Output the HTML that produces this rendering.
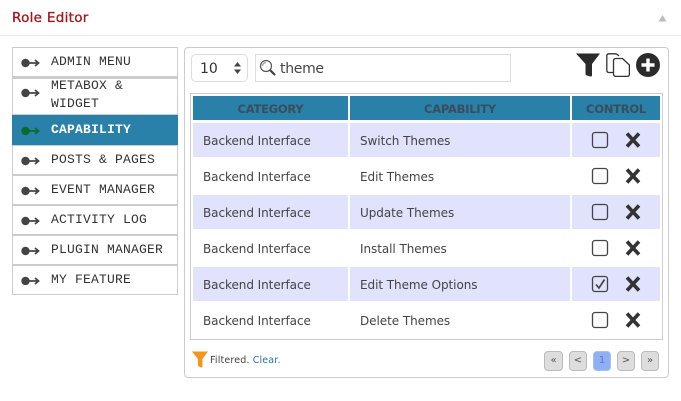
<!DOCTYPE html>
<html>
<head>
<meta charset="utf-8">
<style>
html,body{margin:0;padding:0;background:#fff}
#p{position:relative;width:681px;height:401px;overflow:hidden;background:#fff;font-family:"DejaVu Sans","Liberation Sans",sans-serif;color:#444}
#p div,#p svg{position:absolute;box-sizing:border-box}
.m{left:12px;width:166px;border:1px solid #ccc;font:13px/18px "Liberation Mono",monospace;letter-spacing:.2px;color:#333;white-space:pre}
.m span{position:absolute;left:38px}
.h{top:96px;height:24px;background:#2980a9;color:#3a4d5a;font-size:11.5px;font-weight:bold;letter-spacing:-.25px;line-height:26px;text-align:center}
.r{height:34px;line-height:36px;font-size:12px;letter-spacing:-.06px;color:#444;white-space:nowrap}
.o{background:#e1e2fc}
.pg{top:351px;width:19px;height:20px;background:#ddd;border:1px solid #bbb;border-radius:4px;font-size:10px;line-height:18px;text-align:center;color:#555}
.t{white-space:nowrap}
</style>
</head>
<body>
<div id="p">
<div class="t" style="left:12px;top:9px;font-size:13.5px;line-height:18px;color:#a1191e;letter-spacing:.3px;-webkit-text-stroke:.3px #a1191e">Role Editor</div>
<svg style="left:658px;top:15px" width="10" height="7"><path d="M4.500 0L8.500 6.500H.5Z" fill="#bbb"/></svg>
<div style="left:0;top:35px;width:681px;height:1px;background:#e8e8e8"></div>

<div class="m" style="top:47px;height:30px"><span style="top:5px">ADMIN MENU</span></div>
<div class="m" style="top:77px;height:38px;border-top-width:2px"><span style="top:-2px">METABOX &amp;</span><span style="top:16px">WIDGET</span></div>
<div class="m" style="top:115px;height:30px;background:#2980a9;border-color:#2980a9;color:#fff;font-weight:bold"><span style="top:5px">CAPABILITY</span></div>
<div class="m" style="top:145px;height:30px"><span style="top:5px">POSTS &amp; PAGES</span></div>
<div class="m" style="top:175px;height:30px"><span style="top:5px">EVENT MANAGER</span></div>
<div class="m" style="top:205px;height:30px"><span style="top:5px">ACTIVITY LOG</span></div>
<div class="m" style="top:235px;height:30px"><span style="top:5px">PLUGIN MANAGER</span></div>
<div class="m" style="top:265px;height:30px"><span style="top:5px">MY FEATURE</span></div>

<svg style="left:20px;top:55px" width="22" height="230" fill="none">
<g><circle cx="5.500" cy="8" r="4.200" fill="#444"/><path d="M5 8H18M15 5L18.500 8L15 11" stroke="#444" stroke-width="1.800"/></g>
<g transform="translate(0,30)"><circle cx="5.500" cy="8" r="4.200" fill="#444"/><path d="M5 8H18M15 5L18.500 8L15 11" stroke="#444" stroke-width="1.800"/></g>
<g transform="translate(0,68)"><circle cx="5.500" cy="8" r="4.200" fill="#0a6b2a"/><path d="M5 8H18M15 5L18.500 8L15 11" stroke="#0a6b2a" stroke-width="1.800"/></g>
<g transform="translate(0,98)"><circle cx="5.500" cy="8" r="4.200" fill="#444"/><path d="M5 8H18M15 5L18.500 8L15 11" stroke="#444" stroke-width="1.800"/></g>
<g transform="translate(0,128)"><circle cx="5.500" cy="8" r="4.200" fill="#444"/><path d="M5 8H18M15 5L18.500 8L15 11" stroke="#444" stroke-width="1.800"/></g>
<g transform="translate(0,158)"><circle cx="5.500" cy="8" r="4.200" fill="#444"/><path d="M5 8H18M15 5L18.500 8L15 11" stroke="#444" stroke-width="1.800"/></g>
<g transform="translate(0,188)"><circle cx="5.500" cy="8" r="4.200" fill="#444"/><path d="M5 8H18M15 5L18.500 8L15 11" stroke="#444" stroke-width="1.800"/></g>
<g transform="translate(0,218)"><circle cx="5.500" cy="8" r="4.200" fill="#444"/><path d="M5 8H18M15 5L18.500 8L15 11" stroke="#444" stroke-width="1.800"/></g>
</svg>

<div style="left:184px;top:47px;width:485px;height:331px;border:1px solid #ccc;border-radius:4px"></div>

<div style="left:191px;top:54px;width:57px;height:28px;border:1px solid #ddd;border-radius:5px;font-size:14px;line-height:28px;padding-left:8px;color:#333">10</div>
<svg style="left:233px;top:61px" width="10" height="14"><path d="M4.500 1L8 5.500H1ZM4.500 13L8 8.500H1Z" fill="#444"/></svg>
<div style="left:255px;top:54px;width:256px;height:28px;border:1px solid #ddd"></div>
<svg style="left:259px;top:59px" width="18" height="18" fill="none"><circle cx="7" cy="7" r="5.500" stroke="#555" stroke-width="1.200"/><path d="M3.500 7A3.500 3.500 0 0 1 7 3.500" stroke="#aaa" stroke-width="1.500"/><path d="M11 11L16 16" stroke="#444" stroke-width="2.200"/></svg>
<div class="t" style="left:280px;top:60px;font-size:14px;letter-spacing:-.3px;line-height:18px;color:#444">theme</div>

<svg style="left:576px;top:53px" width="24" height="24"><path d="M0 .5H24L16 11V22.500Q16 23.500 15 23.500Q11 23 9.500 21.500V11Z" fill="#2b2b2b"/></svg>
<svg style="left:606px;top:53px" width="24" height="24" fill="none" stroke="#333" stroke-width="1.300"><path d="M7 19.500H3Q.8 19.500 .8 17V3Q.8 .8 3 .8H9Q11 .8 13 3"/><path d="M7.500 8Q7.500 5.500 10 5.500H16.500L23.400 12V21Q23.400 23.400 21 23.400H10Q7.500 23.400 7.500 21Z" fill="#fff"/></svg>
<svg style="left:636px;top:53px" width="24" height="24"><circle cx="12" cy="12" r="12" fill="#2b2b2b"/><path d="M12 5.500V18.500M5.500 12H18.500" stroke="#fff" stroke-width="3.400"/></svg>

<div style="left:190px;top:93px;width:473px;height:247px;border:1px solid #ccc"></div>
<div class="h" style="left:193px;width:155px">CATEGORY</div>
<div class="h" style="left:350px;width:220px">CAPABILITY</div>
<div class="h" style="left:572px;width:88px">CONTROL</div>

<div class="r o" style="left:193px;top:123px;width:155px;padding-left:10px">Backend Interface</div><div class="r o" style="left:350px;top:123px;width:220px;padding-left:10px">Switch Themes</div><div class="r o" style="left:572px;top:123px;width:88px"></div>
<div class="r" style="left:193px;top:159px;width:155px;padding-left:10px">Backend Interface</div><div class="r" style="left:350px;top:159px;width:220px;padding-left:10px">Edit Themes</div>
<div class="r o" style="left:193px;top:195px;width:155px;padding-left:10px">Backend Interface</div><div class="r o" style="left:350px;top:195px;width:220px;padding-left:10px">Update Themes</div><div class="r o" style="left:572px;top:195px;width:88px"></div>
<div class="r" style="left:193px;top:231px;width:155px;padding-left:10px">Backend Interface</div><div class="r" style="left:350px;top:231px;width:220px;padding-left:10px">Install Themes</div>
<div class="r o" style="left:193px;top:267px;width:155px;padding-left:10px">Backend Interface</div><div class="r o" style="left:350px;top:267px;width:220px;padding-left:10px">Edit Theme Options</div><div class="r o" style="left:572px;top:267px;width:88px"></div>
<div class="r" style="left:193px;top:303px;width:155px;padding-left:10px">Backend Interface</div><div class="r" style="left:350px;top:303px;width:220px;padding-left:10px">Delete Themes</div>

<svg style="left:590px;top:130px" width="54" height="200" fill="none">
<g stroke="#444"><rect x="2.500" y="2.500" width="15" height="15" rx="2.500" stroke-width="1.300"/><rect x="2.500" y="38.500" width="15" height="15" rx="2.500" stroke-width="1.300"/><rect x="2.500" y="74.500" width="15" height="15" rx="2.500" stroke-width="1.300"/><rect x="2.500" y="110.500" width="15" height="15" rx="2.500" stroke-width="1.300"/><rect x="2.500" y="146.500" width="15" height="15" rx="2.500" stroke-width="1.300"/><rect x="2.500" y="182.500" width="15" height="15" rx="2.500" stroke-width="1.300"/>
<path d="M6 154.500L9 158L14.500 149.500" stroke-width="1.700"/></g>
<g stroke="#333" stroke-width="3.600"><path d="M37 3.500L49 16.500M49 3.500L37 16.500"/><path d="M37 39.500L49 52.500M49 39.500L37 52.500"/><path d="M37 75.500L49 88.500M49 75.500L37 88.500"/><path d="M37 111.500L49 124.500M49 111.500L37 124.500"/><path d="M37 147.500L49 160.500M49 147.500L37 160.500"/><path d="M37 183.500L49 196.500M49 183.500L37 196.500"/></g>
</svg>

<svg style="left:192px;top:351px" width="16" height="17"><path d="M0 .5H16L10.500 8V15.500Q10.500 16.500 9.500 16.500Q7 16 6 14.500V8Z" fill="#f7941d"/></svg>
<div class="t" style="left:210px;top:353px;font-size:9.500px;line-height:15px;letter-spacing:.15px;color:#444">Filtered. <span style="color:#2a7398">Clear.</span></div>

<div class="pg" style="left:544px">«</div>
<div class="pg" style="left:569px;width:18px">&lt;</div>
<div class="pg" style="left:593px;width:18px;background:#8fb0f5;border-color:#a9c0ee;color:#5a78b5">1</div>
<div class="pg" style="left:617px;width:18px">&gt;</div>
<div class="pg" style="left:641px;width:18px">»</div>
</div>
</body>
</html>
